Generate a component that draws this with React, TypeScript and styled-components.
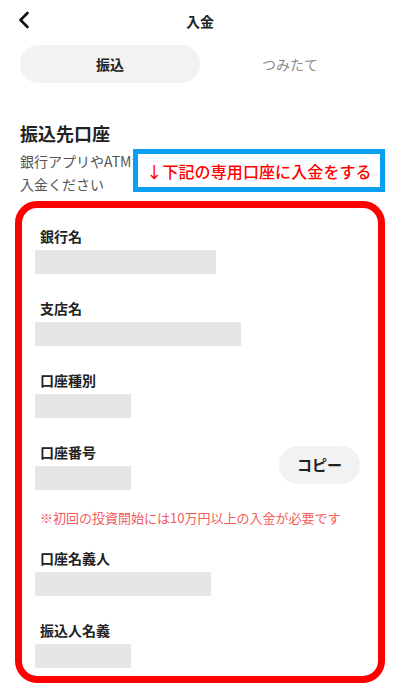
import React from 'react';
import styled, { createGlobalStyle } from 'styled-components';

const GlobalStyle = createGlobalStyle`
  html, body {
    margin: 0;
    padding: 0;
    background: #fff;
  }
  body {
    font-family: "Noto Sans CJK JP", "Noto Sans", sans-serif;
    color: #222;
  }
`;

const Page = styled.div`
  width: 400px;
  min-height: 698px;
  display: flex;
  flex-direction: column;
`;

const Header = styled.div`
  height: 42px;
  display: flex;
  align-items: center;
  justify-content: center;
  position: relative;
`;

const BackButton = styled.button`
  position: absolute;
  left: 12px;
  top: 8px;
  width: 24px;
  height: 24px;
  padding: 0;
  border: none;
  background: none;
  display: flex;
  align-items: center;
  justify-content: center;
`;

const Title = styled.div`
  font-size: 14px;
  font-weight: 700;
  line-height: 20px;
  margin-top: -1px;
`;

const Tabs = styled.div`
  margin: 3px 20px 0;
  display: grid;
  grid-template-columns: 1fr 1fr;
  height: 38px;
`;

const Tab = styled.div<{ $active?: boolean }>`
  display: flex;
  align-items: center;
  justify-content: center;
  border-radius: 19px;
  font-size: 14px;
  font-weight: ${(p) => (p.$active ? 700 : 400)};
  color: ${(p) => (p.$active ? '#222' : '#8a8a8a')};
  background: ${(p) => (p.$active ? '#f2f2f2' : 'transparent')};
`;

const Section = styled.div`
  padding: 0 20px;
  margin-top: 37px;
`;

const Heading = styled.h2`
  margin: 0;
  font-size: 18px;
  font-weight: 700;
  line-height: 26px;
`;

const DescWrap = styled.div`
  position: relative;
  margin-top: 4px;
`;

const Desc = styled.p`
  margin: 0;
  font-size: 14px;
  line-height: 23px;
  color: #555;
`;

const Callout = styled.div`
  position: absolute;
  top: -1px;
  right: -5px;
  width: 252px;
  height: 43px;
  box-sizing: border-box;
  border: 5px solid #0a9ff2;
  background: #fff;
  display: flex;
  align-items: center;
  justify-content: center;
  color: #ff0000;
  font-size: 16px;
  font-weight: 500;
  letter-spacing: 0.1px;
`;

const AccountBox = styled.div`
  margin: 5px 15px 0;
  border: 7px solid #ff0000;
  border-radius: 22px;
  padding: 18px 18px 8px 13px;
  display: flex;
  flex-direction: column;
`;

const FieldRow = styled.div<{ $last?: boolean }>`
  display: flex;
  align-items: center;
  justify-content: space-between;
  padding-bottom: ${(p) => (p.$last ? 0 : 24)}px;
`;

const Field = styled.div`
  display: flex;
  flex-direction: column;
  gap: 4px;
`;

const Label = styled.div`
  font-size: 14px;
  font-weight: 700;
  line-height: 20px;
  padding-left: 5px;
  color: #222;
`;

const Mask = styled.div<{ $w: number }>`
  width: ${(p) => p.$w}px;
  height: 24px;
  background: #e6e6e6;
`;

const CopyButton = styled.button`
  width: 81px;
  height: 38px;
  border: none;
  border-radius: 19px;
  background: #f2f2f2;
  font-family: inherit;
  font-size: 15px;
  font-weight: 700;
  color: #222;
  margin-top: -3px;
`;

const Note = styled.div`
  margin: -5px 0 21px 5px;
  font-size: 13px;
  line-height: 18px;
  color: #f25c5c;
`;

const fields = [
  { label: '銀行名', w: 181 },
  { label: '支店名', w: 206 },
  { label: '口座種別', w: 96 },
  { label: '口座番号', w: 96, copy: true },
  { label: '口座名義人', w: 176 },
  { label: '振込人名義', w: 96 },
];

export default function App() {
  return (
    <Page>
      <GlobalStyle />
      <Header>
        <BackButton aria-label="戻る">
          <svg width="14" height="18" viewBox="0 0 14 18" fill="none">
            <path d="M10.5 2 L3.5 9 L10.5 16" stroke="#111" strokeWidth="2.6" strokeLinecap="round" strokeLinejoin="round" />
          </svg>
        </BackButton>
        <Title>入金</Title>
      </Header>
      <Tabs>
        <Tab $active>振込</Tab>
        <Tab>つみたて</Tab>
      </Tabs>
      <Section>
        <Heading>振込先口座</Heading>
        <DescWrap>
          <Desc>銀行アプリやATMから下記の専用口座に<br />入金ください</Desc>
          <Callout>↓下記の専用口座に入金をする</Callout>
        </DescWrap>
      </Section>
      <AccountBox>
        {fields.map((f, i) => (
          <React.Fragment key={f.label}>
            <FieldRow $last={i === fields.length - 1}>
              <Field>
                <Label>{f.label}</Label>
                <Mask $w={f.w} />
              </Field>
              {f.copy && <CopyButton>コピー</CopyButton>}
            </FieldRow>
            {f.copy && <Note>※初回の投資開始には10万円以上の入金が必要です</Note>}
          </React.Fragment>
        ))}
      </AccountBox>
    </Page>
  );
}
